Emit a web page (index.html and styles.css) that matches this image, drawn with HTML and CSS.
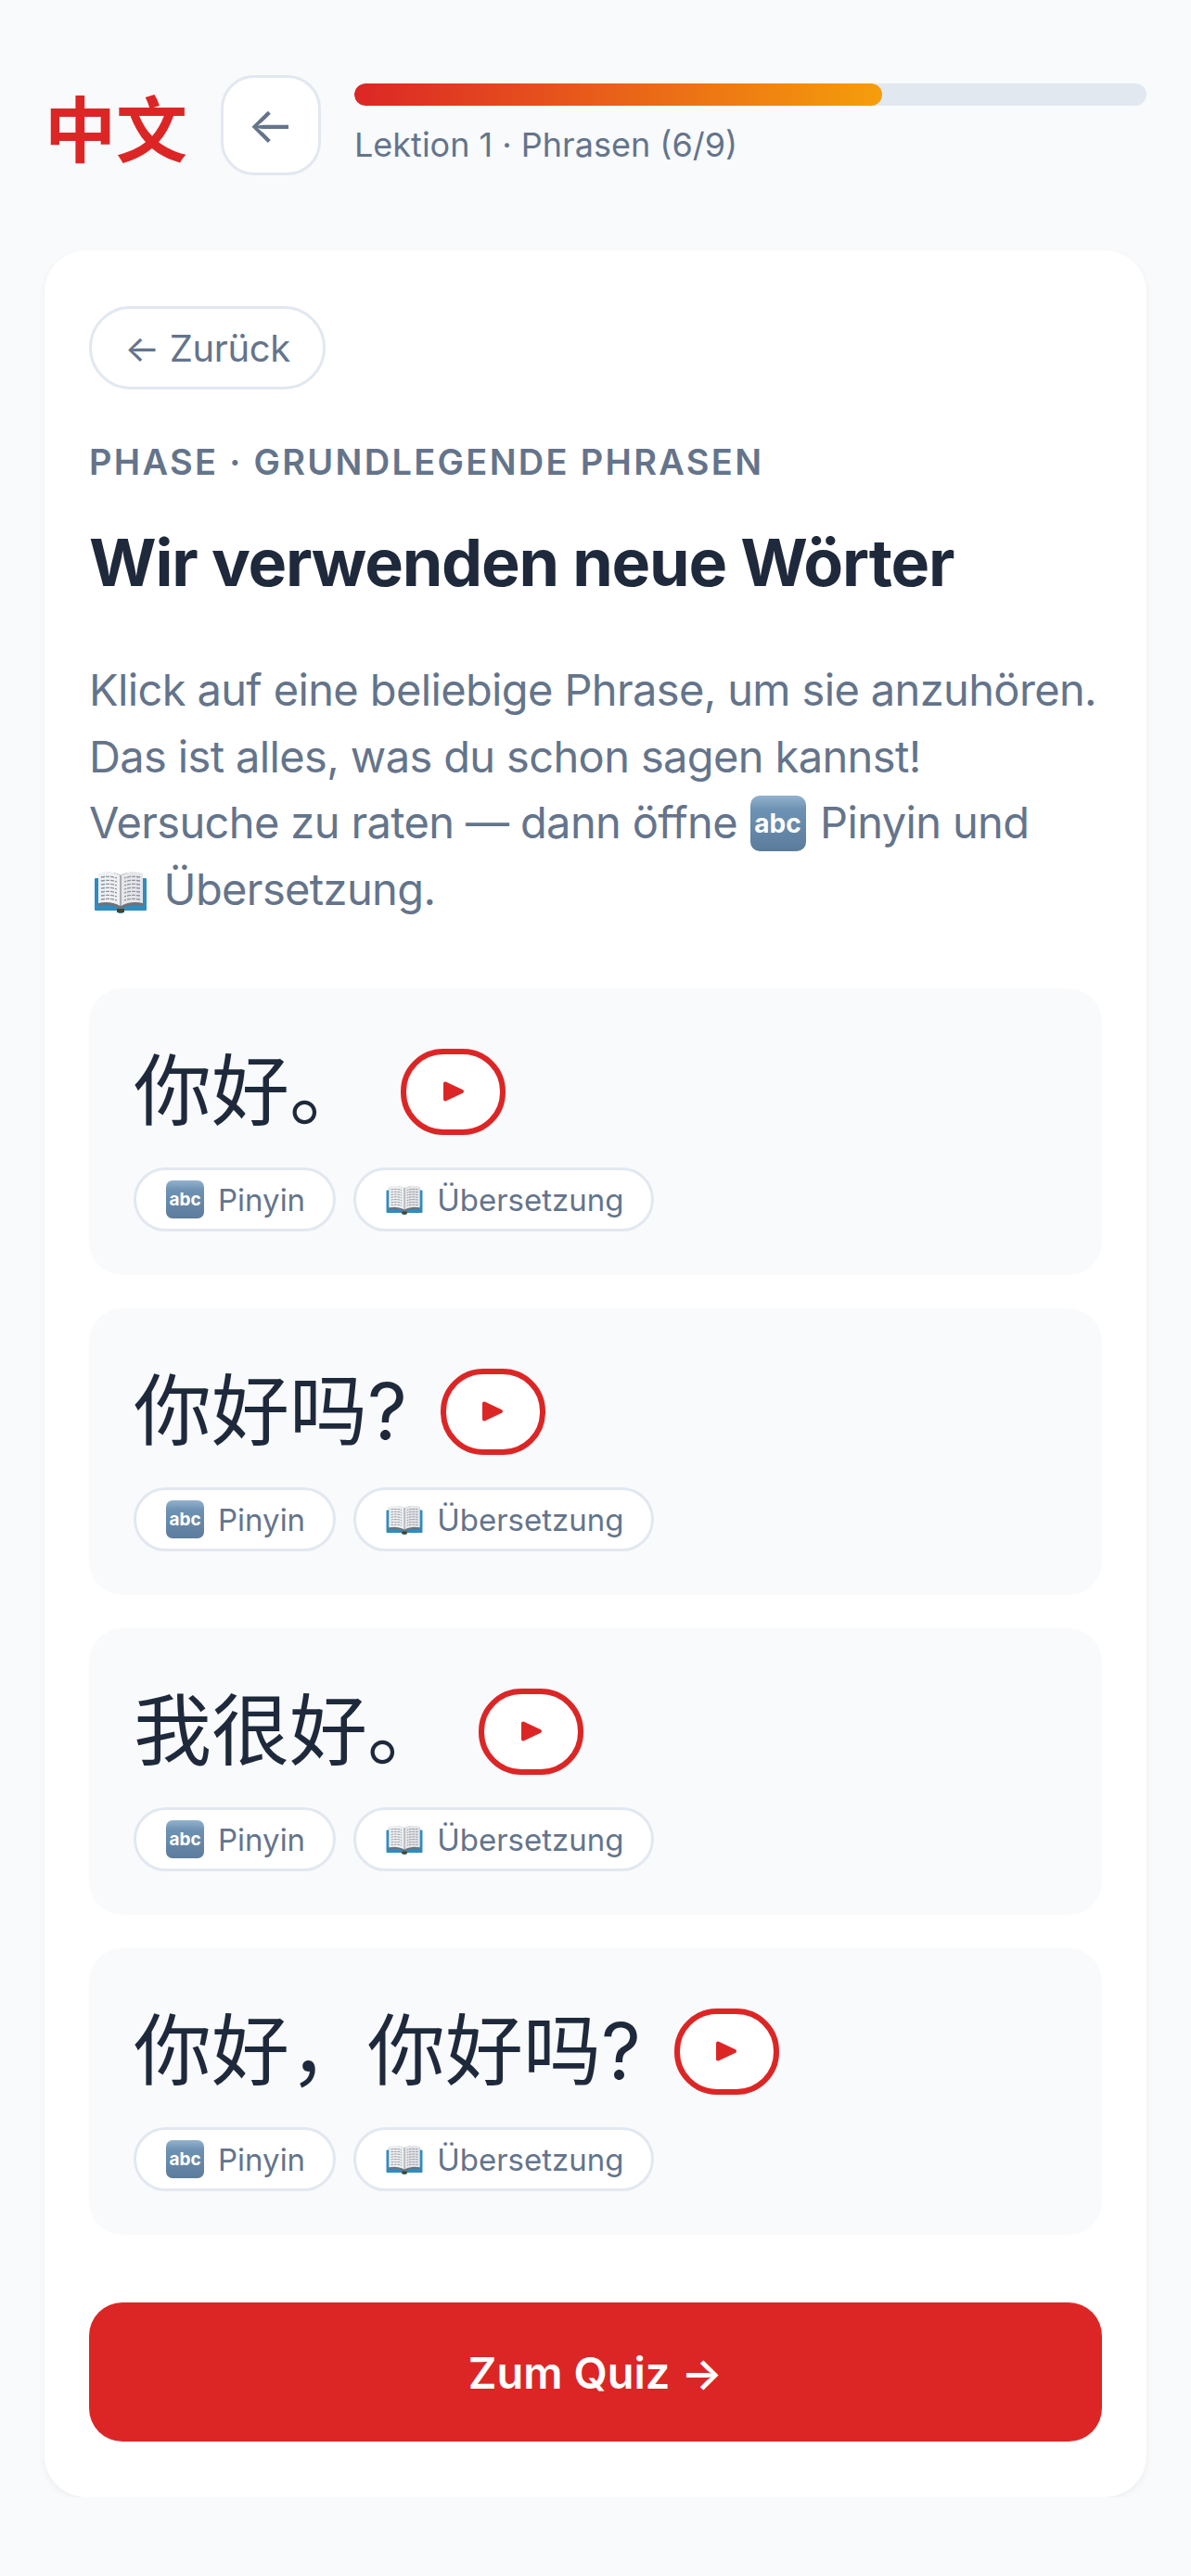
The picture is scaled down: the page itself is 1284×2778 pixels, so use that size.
FILE: index.html
```html
<!DOCTYPE html>
<html>
<head>
    <title>Lektion 1 - Phrasen</title>
    <meta name="viewport" content="width=device-width, initial-scale=1.0">
    <link rel="stylesheet" href="styles.css">
</head>
<body>
<svg class="defs" width="0" height="0">
    <symbol id="book" viewBox="0 0 56 46">
        <path d="M0 9q0-1 1-1h54q1 0 1 1v33q0 1-1 1H32l-2 3h-4l-2-3H1q-1 0-1-1z" fill="#2f8cc0"/>
        <path d="M4 38V4c8-3 17-3 24 1 7-4 16-4 24-1v34c-8-2-17-1-24 3-7-4-16-5-24-3z" fill="#6f7176"/>
        <path d="M4 35V3c8-3 17-2 23.500 2v33C21 34 12 33 4 35z" fill="#eef0f2"/>
        <path d="M52 35V3c-8-3-17-2-23.500 2v33C35 34 44 33 52 35z" fill="#e4e6ea"/>
        <path d="M7 7c6-1 12-1 17 1M7 11c6-1 12-1 17 1M7 15c6-1 12-1 17 1M7 19c6-1 12-1 17 1M7 23c6-1 12-1 17 1M7 27c6-1 12-1 17 1M7 31c6-1 12-1 17 1M49 7c-6-1-12-1-17 1M49 11c-6-1-12-1-17 1M49 15c-6-1-12-1-17 1M49 19c-6-1-12-1-17 1M49 23c-6-1-12-1-17 1M49 27c-6-1-12-1-17 1M49 31c-6-1-12-1-17 1" stroke="#8f949c" stroke-width="1.300" stroke-dasharray="4 1" fill="none"/>
        <path d="M24 41h8v4h-8z" fill="#4a4326"/>
    </symbol>
    <symbol id="play" viewBox="0 0 24 24">
        <path d="M1 3.500v17c0 1.600 1.700 2.500 3 1.700l18-8.500c1.300-.7 1.300-2.700 0-3.400L4 1.800C2.700 1 1 1.900 1 3.500z" fill="#dc2626"/>
    </symbol>
</svg>

<div class="page">
    <div class="header">
        <div class="logo">中文</div>
        <button class="back-square">←</button>
        <div class="progress">
            <div class="bar"><div class="bar-fill" style="width:66.67%"></div></div>
            <div class="progress-text">Lektion 1 · Phrasen (6/9)</div>
        </div>
    </div>

    <div class="card">
        <button class="pill-back">← Zurück</button>
        <div class="eyebrow">PHASE · GRUNDLEGENDE PHRASEN</div>
        <h1>Wir verwenden neue Wörter</h1>
        <p class="intro">Klick auf eine beliebige Phrase, um sie anzuhören. Das ist alles, was du schon sagen kannst! Versuche zu raten — dann öffne <span class="abc abc-big">abc</span> Pinyin und<br><svg class="book-big"><use href="#book"/></svg> Übersetzung.</p>

        <div class="phrases">
            <div class="phrase">
                <div class="phrase-top">
                    <span class="hanzi">你好。</span>
                    <button class="play"><svg width="24" height="24"><use href="#play"/></svg></button>
                </div>
                <div class="chips">
                    <button class="chip"><span class="abc">abc</span>Pinyin</button>
                    <button class="chip"><svg class="book"><use href="#book"/></svg>Übersetzung</button>
                </div>
            </div>
            <div class="phrase">
                <div class="phrase-top">
                    <span class="hanzi">你好吗?</span>
                    <button class="play"><svg width="24" height="24"><use href="#play"/></svg></button>
                </div>
                <div class="chips">
                    <button class="chip"><span class="abc">abc</span>Pinyin</button>
                    <button class="chip"><svg class="book"><use href="#book"/></svg>Übersetzung</button>
                </div>
            </div>
            <div class="phrase">
                <div class="phrase-top">
                    <span class="hanzi">我很好。</span>
                    <button class="play"><svg width="24" height="24"><use href="#play"/></svg></button>
                </div>
                <div class="chips">
                    <button class="chip"><span class="abc">abc</span>Pinyin</button>
                    <button class="chip"><svg class="book"><use href="#book"/></svg>Übersetzung</button>
                </div>
            </div>
            <div class="phrase">
                <div class="phrase-top">
                    <span class="hanzi">你好&#xFF0C;你好吗?</span>
                    <button class="play"><svg width="24" height="24"><use href="#play"/></svg></button>
                </div>
                <div class="chips">
                    <button class="chip"><span class="abc">abc</span>Pinyin</button>
                    <button class="chip"><svg class="book"><use href="#book"/></svg>Übersetzung</button>
                </div>
            </div>
        </div>

        <button class="quiz">Zum Quiz →</button>
    </div>
</div>
</body>
</html>
```

FILE: styles.css
```css
* { box-sizing: border-box; }
body { margin: 0; background: #f8fafc; font-family: Inter, "Noto Sans CJK SC", sans-serif; color: #64748b; }
button { font-family: inherit; cursor: pointer; }
.defs { position: absolute; }
.page { padding: 81px 48px 0; }

.header { display: flex; align-items: center; gap: 36px; }
.logo { font-family: "Noto Sans CJK SC", sans-serif; font-size: 77px; font-weight: 700; line-height: 1; color: #dc2626; flex: none; }
.back-square { width: 108px; height: 108px; flex: none; padding: 0; background: #fff; border: 3px solid #e2e8f0; border-radius: 36px; font-size: 54px; line-height: 1; color: #64748b; }
.progress { flex: 1; }
.bar { height: 24px; background: #e2e8f0; border-radius: 12px; overflow: hidden; }
.bar-fill { height: 100%; border-radius: 12px; background: linear-gradient(90deg, #dc2626, #f59e0b); }
.progress-text { margin-top: 18px; font-size: 36px; line-height: 48px; }

.card { margin-top: 81px; padding: 60px 48px; background: #fff; border-radius: 45px; box-shadow: 0 3px 9px rgba(15, 23, 42, 0.05); }
.pill-back { display: block; height: 90px; width: 255px; padding: 0; background: #fff; border: 3px solid #e2e8f0; border-radius: 45px; font-size: 40px; letter-spacing: -0.4px; color: #64748b; }
.eyebrow { margin-top: 54px; font-size: 38px; line-height: 48px; font-weight: 600; letter-spacing: 2.3px; }
h1 { margin: 43px 0 0; font-size: 70px; letter-spacing: -1.2px; line-height: 84px; font-weight: 700; color: #1e293b; }
.intro { margin: 59px 0 0; font-size: 47px; letter-spacing: -0.63px; line-height: 71.5px; }

.abc { display: inline-block; width: 41px; height: 41px; flex: none; border-radius: 7px; background: linear-gradient(#93b2cd, #6e92b3 25%, #5c7c9c); color: #fff; font-size: 19px; font-weight: 700; letter-spacing: 0; line-height: 41px; text-align: center; }
.abc-big { width: 60px; height: 60px; margin: -12px 3px -6px 1px; border-radius: 10px; font-size: 28px; line-height: 60px; vertical-align: middle; }
.book { width: 40px; height: 32px; flex: none; }
.book-big { width: 56px; height: 46px; margin: 0 6px; vertical-align: -9px; }

.phrases { margin-top: 72px; display: flex; flex-direction: column; gap: 36px; }
.phrase { height: 309px; padding: 48px 48px 0; background: #f8fafc; border-radius: 36px; }
.phrase-top { display: flex; align-items: center; gap: 36px; height: 126px; }
.hanzi { font-size: 84px; line-height: 126px; color: #1e293b; }
.play { width: 113px; height: 93px; flex: none; display: flex; align-items: center; justify-content: center; padding: 0; background: #fff; border: 6px solid #dc2626; border-radius: 46px; }
.chips { display: flex; gap: 19px; margin-top: 19px; }
.chip { display: flex; align-items: center; gap: 15px; height: 69px; padding: 0 30px 0 32px; background: #fff; border: 3px solid #e2e8f0; border-radius: 35px; font-size: 33px; color: #64748b; }

.quiz { display: block; width: 100%; height: 150px; margin-top: 73px; background: #dc2626; border: 0; border-radius: 36px; color: #fff; font-size: 47px; font-weight: 600; }
```
